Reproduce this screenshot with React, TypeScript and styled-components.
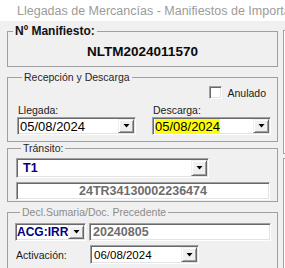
import { type ReactElement, type ReactNode } from "react";
import { createGlobalStyle, css, styled } from "styled-components";

const GlobalStyle = createGlobalStyle`
  html, body {
    margin: 0;
    padding: 0;
    background: #f0f0f0;
    overflow: hidden;
  }
  body {
    font-family: "Liberation Sans", Arial, sans-serif;
    color: #1a1a1a;
  }
`;

const sunken = css`
  box-sizing: border-box;
  border: 1px solid;
  border-color: #a0a0a0 #ffffff #ffffff #a0a0a0;
  box-shadow: inset 1px 1px 0 #696969, inset -1px -1px 0 #e3e3e3;
  background: #ffffff;
`;

const Window = styled.div`
  width: 285px;
  height: 268px;
  overflow: hidden;
`;

const TitleBar = styled.div`
  height: 21px;
  background: #ffffff;
  display: flex;
  align-items: center;
  gap: 10px;
  padding-left: 7px;
  white-space: nowrap;
  overflow: hidden;
`;

const TitleText = styled.span`
  font-size: 12.5px;
  color: #9b9b9b;
`;

const Body = styled.div`
  display: flex;
  gap: 5px;
  padding: 3px 0 0 7px;
`;

const LeftColumn = styled.div`
  width: 271px;
  flex: none;
  display: flex;
  flex-direction: column;
`;

const RightColumn = styled.div`
  flex: none;
  width: 40px;
  display: flex;
  flex-direction: column;
  gap: 4px;
  padding-top: 6px;
`;

const SidePanel = styled.div<{ $h: number }>`
  height: ${p => p.$h}px;
  border: 1px solid #a0a0a0;
  box-shadow: inset 1px 1px 0 #ffffff;
`;

const Group = styled.fieldset<{ $mt: number; $pad: string }>`
  margin: ${p => p.$mt}px 0 0;
  padding: ${p => p.$pad};
  min-width: 0;
  border: 1px solid #a0a0a0;
`;

const Legend = styled.legend<{ $bold?: boolean; $muted?: boolean }>`
  margin-left: 5px;
  padding: 0 2px;
  font-size: ${p => (p.$bold ? "12px" : "10.5px")};
  line-height: ${p => (p.$bold ? "14px" : "12px")};
  font-weight: ${p => (p.$bold ? 700 : 400)};
  color: ${p => (p.$muted ? "#8c8c8c" : p.$bold ? "#111" : "#262626")};
`;

const ManifestValue = styled.div`
  padding: 6px 0;
  text-align: center;
  font-size: 13.5px;
  line-height: 16px;
  font-weight: 700;
  color: #0a0a0a;
`;

const CheckRow = styled.label`
  display: flex;
  justify-content: flex-end;
  align-items: center;
  gap: 5px;
  height: 13px;
  padding-right: 5px;
  font-size: 10.5px;
`;

const CheckBox = styled.span`
  ${sunken};
  width: 13px;
  height: 13px;
`;

const DateGrid = styled.div`
  display: grid;
  grid-template-columns: 119px 119px;
  column-gap: 16px;
  margin-top: 4px;
`;

const Field = styled.div`
  display: flex;
  flex-direction: column;
`;

const FieldLabel = styled.span<{ $w?: number }>`
  font-size: 10.5px;
  line-height: 14px;
  padding-left: 1px;
  ${p => p.$w && `width: ${p.$w}px; flex: none;`}
`;

const ComboBox = styled.div<{ $w: number; $h: number }>`
  ${sunken};
  width: ${p => p.$w}px;
  height: ${p => p.$h}px;
  padding: 1px;
  display: flex;
  align-items: stretch;
`;

const ComboValue = styled.div<{
  $size: number;
  $bold?: boolean;
  $pl: number;
}>`
  flex: 1;
  min-width: 0;
  display: flex;
  align-items: center;
  padding-left: ${p => p.$pl}px;
  font-size: ${p => p.$size}px;
  font-weight: ${p => (p.$bold ? 700 : 400)};
  color: ${p => (p.$bold ? "#000080" : "#000")};
  white-space: nowrap;
  overflow: hidden;
`;

const Highlight = styled.span`
  background: #ffff00;
  line-height: 15px;
`;

const DropButton = styled.div`
  width: 16px;
  flex: none;
  box-sizing: border-box;
  background: #f0f0f0;
  border: 1px solid;
  border-color: #f0f0f0 #696969 #696969 #f0f0f0;
  box-shadow: inset 1px 1px 0 #ffffff, inset -1px -1px 0 #a0a0a0;
  display: flex;
  align-items: center;
  justify-content: center;
`;

const TextBox = styled.div<{ $w: number; $h: number; $center?: boolean }>`
  ${sunken};
  width: ${p => p.$w}px;
  height: ${p => p.$h}px;
  display: flex;
  align-items: center;
  justify-content: ${p => (p.$center ? "center" : "flex-start")};
  padding-left: ${p => (p.$center ? 0 : 3)}px;
  font-size: 12.5px;
  font-weight: 700;
  color: #6d6d6d;
`;

const Stack = styled.div<{ $gap: number }>`
  display: flex;
  flex-direction: column;
  gap: ${p => p.$gap}px;
`;

const Row = styled.div<{ $gap: number }>`
  display: flex;
  align-items: center;
  gap: ${p => p.$gap}px;
`;

function AppIcon(): ReactElement {
  return (
    <svg width="14" height="13" viewBox="0 0 14 13">
      <polygon points="8,0 11,5 5,5" fill="#8fb6dc" />
      <line x1="8" y1="0" x2="8" y2="6" stroke="#5b8fc4" strokeWidth="1" />
      <rect x="0" y="6" width="11" height="6" fill="#1f6fc4" />
      <rect x="0" y="6" width="11" height="1" fill="#4f93d8" />
      <rect x="11" y="9" width="3" height="3" fill="#7fb2e6" />
    </svg>
  );
}

function Combo({
  w,
  h,
  size,
  bold,
  pl = 1,
  children,
}: {
  w: number;
  h: number;
  size: number;
  bold?: boolean;
  pl?: number;
  children: ReactNode;
}): ReactElement {
  return (
    <ComboBox $w={w} $h={h}>
      <ComboValue $size={size} $bold={bold} $pl={pl}>
        {children}
      </ComboValue>
      <DropButton>
        <svg width="7" height="4" viewBox="0 0 7 4">
          <polygon points="0.5,0 6.5,0 3.5,3.5" fill="#000" />
        </svg>
      </DropButton>
    </ComboBox>
  );
}

export default function App(): ReactElement {
  return (
    <>
      <GlobalStyle />
      <Window>
        <TitleBar>
          <AppIcon />
          <TitleText>Llegadas de Mercancías - Manifiestos de Importación</TitleText>
        </TitleBar>
        <Body>
          <LeftColumn>
            <Group $mt={0} $pad="0">
              <Legend $bold>Nº Manifiesto:</Legend>
              <ManifestValue>NLTM2024011570</ManifestValue>
            </Group>

            <Group $mt={4} $pad="3px 6px 6px 9px">
              <Legend>Recepción y Descarga</Legend>
              <CheckRow>
                <CheckBox />
                Anulado
              </CheckRow>
              <DateGrid>
                <Field>
                  <FieldLabel>Llegada:</FieldLabel>
                  <Combo w={119} h={18} size={13}>
                    05/08/2024
                  </Combo>
                </Field>
                <Field>
                  <FieldLabel>Descarga:</FieldLabel>
                  <Combo w={119} h={18} size={13}>
                    <Highlight>05/08/2024</Highlight>
                  </Combo>
                </Field>
              </DateGrid>
            </Group>

            <Group $mt={0} $pad="4px 6px 1px 8px">
              <Legend>Tránsito:</Legend>
              <Stack $gap={4}>
                <Combo w={193} h={20} size={12.5} bold pl={5}>
                  T1
                </Combo>
                <TextBox $w={254} $h={18} $center>
                  24TR34130002236474
                </TextBox>
              </Stack>
            </Group>

            <Group $mt={4} $pad="5px 6px 4px 7px">
              <Legend $muted>Decl.Sumaria/Doc. Precedente</Legend>
              <Stack $gap={4}>
                <Row $gap={3}>
                  <Combo w={71} h={18} size={12} bold pl={0}>
                    ACG:IRR
                  </Combo>
                  <TextBox $w={182} $h={18}>
                    20240805
                  </TextBox>
                </Row>
                <Row $gap={0}>
                  <FieldLabel $w={74}>Activación:</FieldLabel>
                  <Combo w={109} h={19} size={11.5} pl={2}>
                    06/08/2024
                  </Combo>
                </Row>
              </Stack>
            </Group>
          </LeftColumn>
          <RightColumn>
            <SidePanel $h={122} />
            <SidePanel $h={200} />
          </RightColumn>
        </Body>
      </Window>
    </>
  );
}
